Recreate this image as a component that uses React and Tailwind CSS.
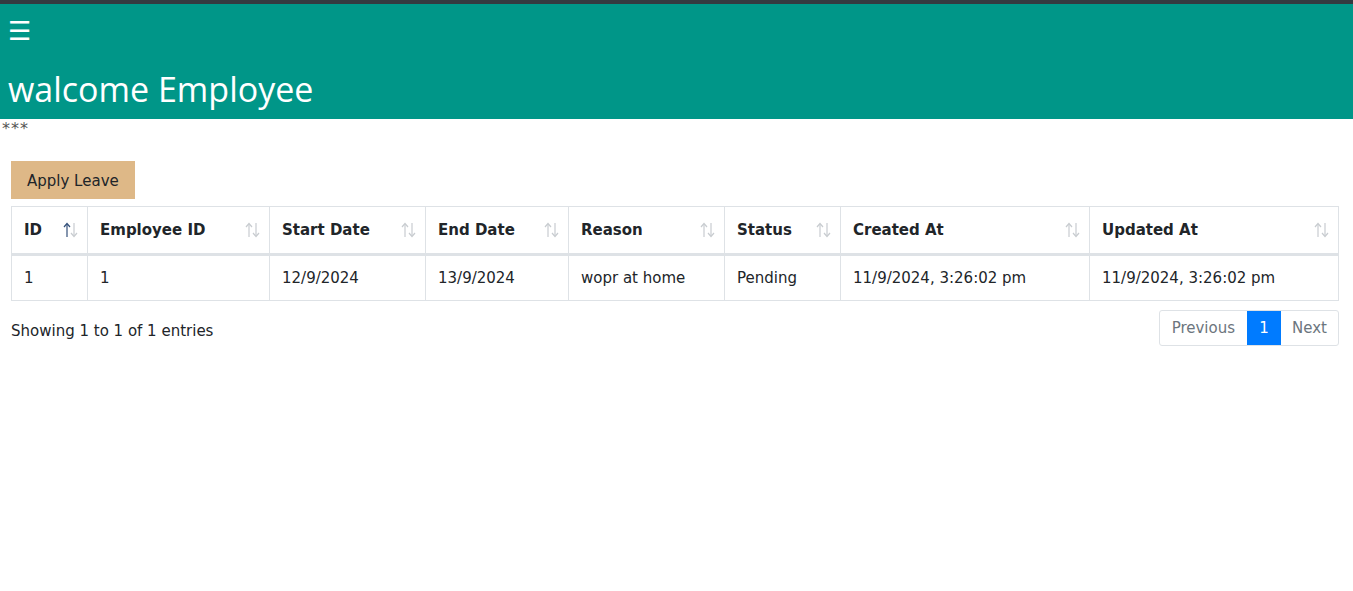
const columns = [
  { label: "ID", w: "w-[76px]", active: true },
  { label: "Employee ID", w: "w-[182px]" },
  { label: "Start Date", w: "w-[156px]" },
  { label: "End Date", w: "w-[143px]" },
  { label: "Reason", w: "w-[156px]" },
  { label: "Status", w: "w-[116px]" },
  { label: "Created At", w: "w-[249px]" },
  { label: "Updated At", w: "w-[249px]" },
];

const row = ["1", "1", "12/9/2024", "13/9/2024", "wopr at home", "Pending", "11/9/2024, 3:26:02 pm", "11/9/2024, 3:26:02 pm"];

// up/down sort arrows drawn as thin strokes
const SortIcon = ({ active }) => (
  <svg className="absolute right-[9px] top-1/2 -translate-y-1/2" width="15" height="16" viewBox="0 0 15 16" fill="none" strokeWidth="1.2">
    <g stroke={active ? "#34507a" : "#c8ccd0"}>
      <path d="M4 15V2" />
      <path d="M1 5L4 1.5L7 5" />
    </g>
    <g stroke="#c8ccd0">
      <path d="M11 1V14" />
      <path d="M8 11L11 14.5L14 11" />
    </g>
  </svg>
);

export default function App() {
  return (
    <div className="min-h-[591px] bg-white text-[#212529] font-['DejaVu_Sans',Verdana,sans-serif] text-[15px]">
      <div className="h-[4px] bg-[#343a40]" />
      <header className="bg-[#009688] h-[115px] flex flex-col px-[8px]">
        <div className="text-white text-[26px] leading-none mt-[14px]">☰</div>
        <h1 className="text-white text-[34px] leading-none mt-[28px] font-['Open_Sans',sans-serif]">walcome Employee</h1>
      </header>
      <div className="text-[16px] leading-[20px] text-[#555] px-[2px] tracking-[1px]">***</div>

      <div className="px-[11px] pt-[22px] w-[1350px]">
        <button className="bg-[#deb887] h-[38px] px-[16px] text-[15px] text-[#212529] pt-[2px]">Apply Leave</button>

        <table className="mt-[7px] border-collapse border border-[#dee2e6] w-[1328px] table-fixed">
          <thead>
            <tr className="h-[48px]">
              {columns.map((c) => (
                <th
                  key={c.label}
                  className={`${c.w} relative border border-[#dee2e6] border-b-[3px] text-left font-bold px-[12px] text-[15px]`}
                >
                  {c.label}
                  <SortIcon active={c.active} />
                </th>
              ))}
            </tr>
          </thead>
          <tbody>
            <tr className="h-[46px]">
              {row.map((v, i) => (
                <td key={i} className="border border-[#dee2e6] px-[12px] text-[15px]">
                  {v}
                </td>
              ))}
            </tr>
          </tbody>
        </table>

        <div className="flex items-center justify-between mt-[9px] w-[1328px]">
          <div className="mt-[6px]">Showing 1 to 1 of 1 entries</div>
          <div className="flex h-[36px] border border-[#dee2e6] rounded-[3px] overflow-hidden">
            <span className="px-[12px] flex items-center text-[#6c757d]">Previous</span>
            <span className="w-[34px] flex items-center justify-center bg-[#007bff] text-white">1</span>
            <span className="px-[11px] flex items-center text-[#6c757d]">Next</span>
          </div>
        </div>
      </div>
    </div>
  );
}
